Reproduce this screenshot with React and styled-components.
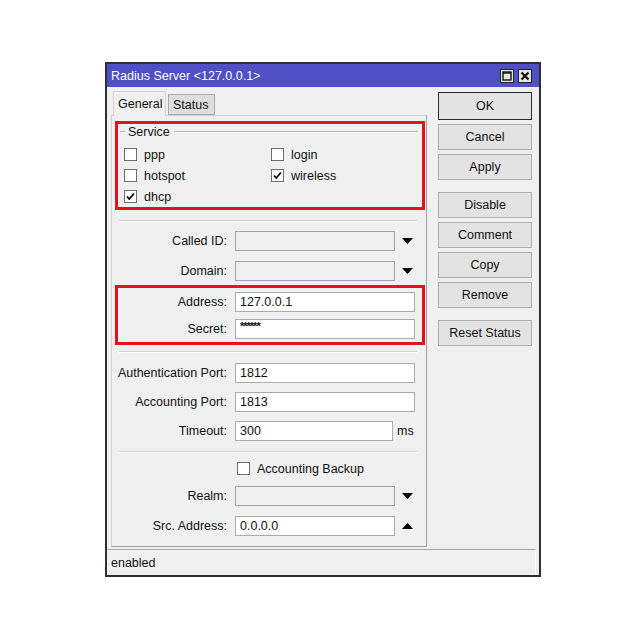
import React from 'react';
import styled, { createGlobalStyle } from 'styled-components';

const Global = createGlobalStyle`
  html, body { margin: 0; padding: 0; background: #fff; }
  body {
    font-family: "Liberation Sans", Arial, sans-serif;
    font-size: 12.5px;
    color: #111;
  }
`;

const Page = styled.div`
  width: 643px;
  height: 643px;
  box-sizing: border-box;
  padding: 62px 0 0 105px;
  background: #fff;
`;

const Window = styled.div`
  width: 436px;
  height: 515px;
  box-sizing: border-box;
  border: 2px solid #2f2f2f;
  background: #f0f0f0;
  display: flex;
  flex-direction: column;
`;

const TitleBar = styled.div`
  height: 23px;
  flex: none;
  background: #4f4fc6;
  display: flex;
  align-items: center;
  padding: 0 7px 0 4px;
  color: #fff;
`;

const Title = styled.div`
  flex: 1;
`;

const TitleButtons = styled.div`
  display: flex;
  gap: 4px;
`;

const TitleBtn = styled.div`
  width: 14px;
  height: 14px;
  box-sizing: border-box;
  border: 1px solid #222;
  background: #e6e6e6;
  display: flex;
  align-items: center;
  justify-content: center;
`;

const Body = styled.div`
  height: 460px;
  flex: none;
  display: flex;
  padding: 4px 7px 0 4px;
  box-sizing: border-box;
`;

const LeftCol = styled.div`
  width: 316px;
  display: flex;
  flex-direction: column;
`;

const Tabs = styled.div`
  height: 24px;
  display: flex;
  align-items: flex-end;
  gap: 2px;
  padding-left: 2px;
`;

const Tab = styled.div`
  box-sizing: border-box;
  height: ${p => (p.$active ? 25 : 21)}px;
  width: ${p => p.$w}px;
  padding-left: 4px;
  display: flex;
  align-items: center;
  background: ${p => (p.$active ? '#f0f0f0' : '#dedede')};
  border: 1px solid ${p => (p.$active ? '#d2d2d2' : '#aaaaaa')};
  border-bottom: ${p => (p.$active ? 'none' : '1px solid #aaaaaa')};
  margin-bottom: ${p => (p.$active ? '-1px' : '0')};
  position: relative;
  z-index: ${p => (p.$active ? 1 : 0)};
`;

const Panel = styled.div`
  height: 432px;
  box-sizing: border-box;
  border: 1px solid #d2d2d2;
  border-right-color: #a0a0a0;
  border-bottom-color: #a0a0a0;
  padding: 4px 1px 0 3px;
  display: flex;
  flex-direction: column;
`;

const RedBox = styled.div`
  box-sizing: border-box;
  border: 3px solid #e3121b;
  margin-top: ${p => p.$mt || 0}px;
  height: ${p => p.$h}px;
  display: flex;
  flex-direction: column;
`;

const Legend = styled.div`
  height: 16px;
  display: flex;
  align-items: center;
  padding: 0 4px 0 2px;
  gap: 3px;
`;

const LegendLine = styled.div`
  height: 1px;
  background: #b4b4b4;
  border-bottom: 1px solid #fff;
  width: ${p => (p.$w ? `${p.$w}px` : 'auto')};
  flex: ${p => (p.$w ? 'none' : '1')};
  margin-left: ${p => p.$ml || 0}px;
`;

const CheckGrid = styled.div`
  margin-top: 5px;
  padding-left: 6px;
  display: grid;
  grid-template-columns: 147px 1fr;
  grid-auto-rows: 21px;
`;

const CheckItem = styled.div`
  display: flex;
  align-items: center;
  gap: 7px;
`;

const Box = styled.div`
  width: 13px;
  height: 13px;
  box-sizing: border-box;
  border: 1px solid #6e6e6e;
  background: #fff;
  display: flex;
  align-items: center;
  justify-content: center;
  flex: none;
`;

const Separator = styled.div`
  height: 1px;
  background: #d0d0d0;
  border-bottom: 1px solid #fff;
  margin: ${p => p.$mt}px 8px ${p => p.$mb}px 4px;
  flex: none;
`;

const Row = styled.div`
  height: ${p => p.$h}px;
  flex: none;
  display: flex;
  align-items: center;
`;

const Label = styled.div`
  width: ${p => p.$w}px;
  text-align: right;
  margin-right: 8px;
  white-space: nowrap;
`;

const Field = styled.div`
  width: ${p => p.$w}px;
  height: 20px;
  box-sizing: border-box;
  border: 1px solid ${p => (p.$combo ? '#a3a3a3' : '#ababab')};
  background: ${p => (p.$combo ? '#f0f0f0' : '#fff')};
  padding-left: 4px;
  display: flex;
  align-items: center;
  white-space: nowrap;
`;

const Secret = styled.span`
  font-size: 11px;
  font-weight: bold;
  letter-spacing: -1px;
  align-self: flex-start;
  line-height: 11px;
  margin-top: 1px;
`;

const Suffix = styled.div`
  width: ${p => p.$w}px;
  margin-left: ${p => p.$ml || 0}px;
  display: flex;
  align-items: center;
  justify-content: ${p => (p.$center ? 'center' : 'flex-start')};
`;

const ButtonCol = styled.div`
  margin-left: 11px;
  width: 94px;
  padding-top: 1px;
  display: flex;
  flex-direction: column;
  gap: 12px;
`;

const Group = styled.div`
  display: flex;
  flex-direction: column;
  gap: 4px;
`;

const Btn = styled.div`
  height: ${p => (p.$default ? 28 : 26)}px;
  box-sizing: border-box;
  border: 1px solid ${p => (p.$default ? '#2c2c2c' : '#adadad')};
  background: #e3e3e3;
  display: flex;
  align-items: center;
  justify-content: center;
`;

const StatusBar = styled.div`
  height: 26px;
  flex: none;
  box-sizing: border-box;
  margin: 2px 3px 0 0;
  border-top: 1px solid #a8a8a8;
  border-right: 1px solid #fff;
  padding-left: 4px;
  display: flex;
  align-items: center;
`;

const Check = () => (
  <svg width="11" height="11" viewBox="0 0 11 11">
    <polyline points="2,5.5 4.2,8 9,2.5" fill="none" stroke="#000" strokeWidth="1.8" />
  </svg>
);

const CheckBox = ({ checked, label }) => (
  <CheckItem>
    <Box>{checked && <Check />}</Box>
    <span>{label}</span>
  </CheckItem>
);

const Arrow = ({ up }) => (
  <svg width="11" height="6" viewBox="0 0 11 6">
    <polygon points={up ? '0,6 11,6 5.5,0' : '0,0 11,0 5.5,6'} fill="#000" />
  </svg>
);

const FormRow = ({ h, lw, label, fw, combo, children, suffix }) => (
  <Row $h={h}>
    <Label $w={lw}>{label}</Label>
    <Field $w={fw} $combo={combo}>{children}</Field>
    {suffix}
  </Row>
);

export default function App() {
  return (
    <Page>
      <Global />
      <Window>
        <TitleBar>
          <Title>Radius Server &lt;127.0.0.1&gt;</Title>
          <TitleButtons>
            <TitleBtn>
              <svg width="10" height="10" viewBox="0 0 10 10">
                <rect x="1" y="1" width="8" height="8" fill="none" stroke="#111" strokeWidth="1.4" />
                <line x1="1" y1="2" x2="9" y2="2" stroke="#111" strokeWidth="1.4" />
              </svg>
            </TitleBtn>
            <TitleBtn>
              <svg width="10" height="10" viewBox="0 0 10 10">
                <path d="M1.5 1.5 L8.5 8.5 M8.5 1.5 L1.5 8.5" stroke="#111" strokeWidth="2.2" />
              </svg>
            </TitleBtn>
          </TitleButtons>
        </TitleBar>
        <Body>
          <LeftCol>
            <Tabs>
              <Tab $active $w={53}>General</Tab>
              <Tab $w={47}>Status</Tab>
            </Tabs>
            <Panel>
              <RedBox $mt={1} $h={89}>
                <Legend>
                  <LegendLine $w={5} />
                  <span>Service</span>
                  <LegendLine $ml={1} />
                </Legend>
                <CheckGrid>
                  <CheckBox label="ppp" />
                  <CheckBox label="login" />
                  <CheckBox label="hotspot" />
                  <CheckBox label="wireless" checked />
                  <CheckBox label="dhcp" checked />
                </CheckGrid>
              </RedBox>
              <Separator $mt={10} $mb={4} />
              <FormRow h={30} lw={112} label="Called ID:" fw={160} combo
                suffix={<Suffix $w={24} $center><Arrow /></Suffix>} />
              <FormRow h={29} lw={112} label="Domain:" fw={160} combo
                suffix={<Suffix $w={24} $center><Arrow /></Suffix>} />
              <RedBox $h={60}>
                <FormRow h={27} lw={109} label="Address:" fw={180}>127.0.0.1</FormRow>
                <FormRow h={27} lw={109} label="Secret:" fw={180}><Secret>******</Secret></FormRow>
              </RedBox>
              <Separator $mt={6} $mb={5} />
              <FormRow h={29} lw={112} label="Authentication Port:" fw={180}>1812</FormRow>
              <FormRow h={29} lw={112} label="Accounting Port:" fw={180}>1813</FormRow>
              <FormRow h={29} lw={112} label="Timeout:" fw={158}
                suffix={<Suffix $w={20} $ml={4}>ms</Suffix>}>300</FormRow>
              <Separator $mt={6} $mb={3} />
              <Row $h={25}>
                <Label $w={114} />
                <CheckBox label="Accounting Backup" />
              </Row>
              <FormRow h={30} lw={112} label="Realm:" fw={160} combo
                suffix={<Suffix $w={24} $center><Arrow /></Suffix>} />
              <FormRow h={29} lw={112} label="Src. Address:" fw={160}
                suffix={<Suffix $w={24} $center><Arrow up /></Suffix>}>0.0.0.0</FormRow>
            </Panel>
          </LeftCol>
          <ButtonCol>
            <Group>
              <Btn $default>OK</Btn>
              <Btn>Cancel</Btn>
              <Btn>Apply</Btn>
            </Group>
            <Group>
              <Btn>Disable</Btn>
              <Btn>Comment</Btn>
              <Btn>Copy</Btn>
              <Btn>Remove</Btn>
            </Group>
            <Group>
              <Btn>Reset Status</Btn>
            </Group>
          </ButtonCol>
        </Body>
        <StatusBar>enabled</StatusBar>
      </Window>
    </Page>
  );
}
